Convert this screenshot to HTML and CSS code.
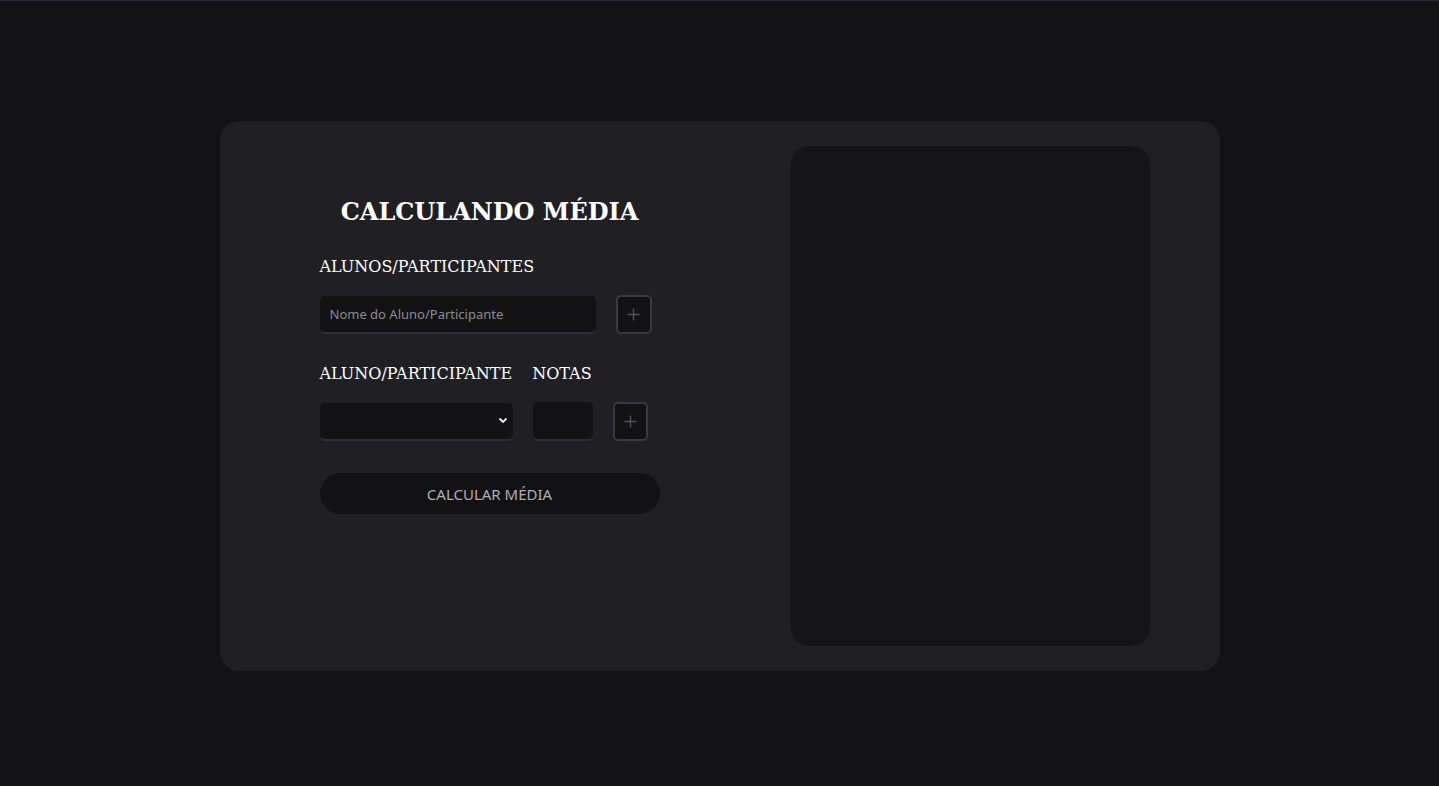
FILE: index.html
```html
<!DOCTYPE html>
<html lang="pt-BR">
<head>
<meta charset="utf-8">
<title>Calculando Média</title>
<link rel="stylesheet" href="styles.css">
</head>
<body>
<main class="page">
  <section class="card">
    <div class="form-col">
      <h1 class="title">CALCULANDO MÉDIA</h1>
      <label class="label label-first">ALUNOS/PARTICIPANTES</label>
      <div class="row">
        <input class="field field-name" type="text" placeholder="Nome do Aluno/Participante">
        <button class="plus plus-1" type="button" aria-label="Adicionar">
          <svg width="13" height="13" viewBox="0 0 13 13"><path d="M6.5 0.5 V12.5 M0.5 6.5 H12.5" stroke="#505057" stroke-width="1.4" fill="none"/></svg>
        </button>
      </div>
      <div class="labels-row">
        <span class="label label-aluno">ALUNO/PARTICIPANTE</span>
        <span class="label">NOTAS</span>
      </div>
      <div class="row row-2">
        <div class="select">
          <svg class="chev" width="10" height="7" viewBox="0 0 10 7"><path d="M1.5 1.5 L5 5 L8.5 1.5" fill="none" stroke="#f0f0f0" stroke-width="1.8"/></svg>
        </div>
        <div class="field field-nota"></div>
        <button class="plus plus-2" type="button" aria-label="Adicionar nota">
          <svg width="13" height="13" viewBox="0 0 13 13"><path d="M6.5 0.5 V12.5 M0.5 6.5 H12.5" stroke="#505057" stroke-width="1.4" fill="none"/></svg>
        </button>
      </div>
      <button class="calc" type="button">CALCULAR MÉDIA</button>
    </div>
    <div class="panel"></div>
  </section>
</main>
</body>
</html>
```
FILE: styles.css
```css
html, body {
  margin: 0;
  padding: 0;
  background: #131315;
}
body {
  border-top: 1px solid #29272f;
  min-height: 785px;
  box-sizing: border-box;
}
.page {
  display: flex;
  justify-content: center;
  padding-top: 120px;
}
.card {
  width: 1000px;
  height: 550px;
  box-sizing: border-box;
  background: #202024;
  border-radius: 20px;
  display: flex;
  padding: 25px 70px 25px 100px;
  gap: 130px;
}
.form-col {
  width: 340px;
  display: flex;
  flex-direction: column;
  padding-top: 51px;
}
.title {
  margin: 0;
  font-family: "DejaVu Serif", serif;
  font-weight: bold;
  font-size: 24px;
  color: #ffffff;
  text-align: center;
  line-height: 30px;
}
.label {
  font-family: "DejaVu Serif", serif;
  font-size: 16px;
  color: #ffffff;
  line-height: 20px;
}
.label-first {
  margin-top: 30px;
}
.row {
  display: flex;
  align-items: center;
  margin-top: 18px;
}
.field {
  box-sizing: border-box;
  background: #121214;
  border: none;
  border-bottom: 2px solid #2f2f35;
  border-radius: 5px;
  height: 38px;
}
.field-name {
  width: 276px;
  height: 38px;
  padding: 0 10px;
  font-family: "Noto Sans", sans-serif;
  font-size: 13px;
  color: #ccc;
  outline: none;
}
.field-name::placeholder {
  color: #8b8b92;
}
.plus {
  box-sizing: border-box;
  width: 36px;
  height: 39px;
  background: #121214;
  border: 2px solid #3a3a40;
  border-radius: 5px;
  padding: 0;
  display: flex;
  align-items: center;
  justify-content: center;
}
.plus-1 {
  margin-left: 20px;
}
.labels-row {
  display: flex;
  gap: 20px;
  margin-top: 30px;
}
.row-2 {
  margin-top: 18px;
}
.select {
  box-sizing: border-box;
  width: 193px;
  height: 38px;
  background: #121214;
  border-bottom: 2px solid #2f2f35;
  border-radius: 5px;
  display: flex;
  align-items: center;
  justify-content: flex-end;
  padding-right: 5px;
}
.field-nota {
  width: 60px;
  height: 39px;
  margin-left: 20px;
}
.plus-2 {
  margin-left: 20px;
  width: 35px;
}
.calc {
  margin-top: 32px;
  width: 340px;
  height: 41px;
  border: none;
  border-radius: 21px;
  background: #121214;
  color: #aeaeb4;
  font-family: "Noto Sans", sans-serif;
  font-size: 15px;
}
.panel {
  width: 360px;
  height: 500px;
  background: #151518;
  border-radius: 20px;
}
```
